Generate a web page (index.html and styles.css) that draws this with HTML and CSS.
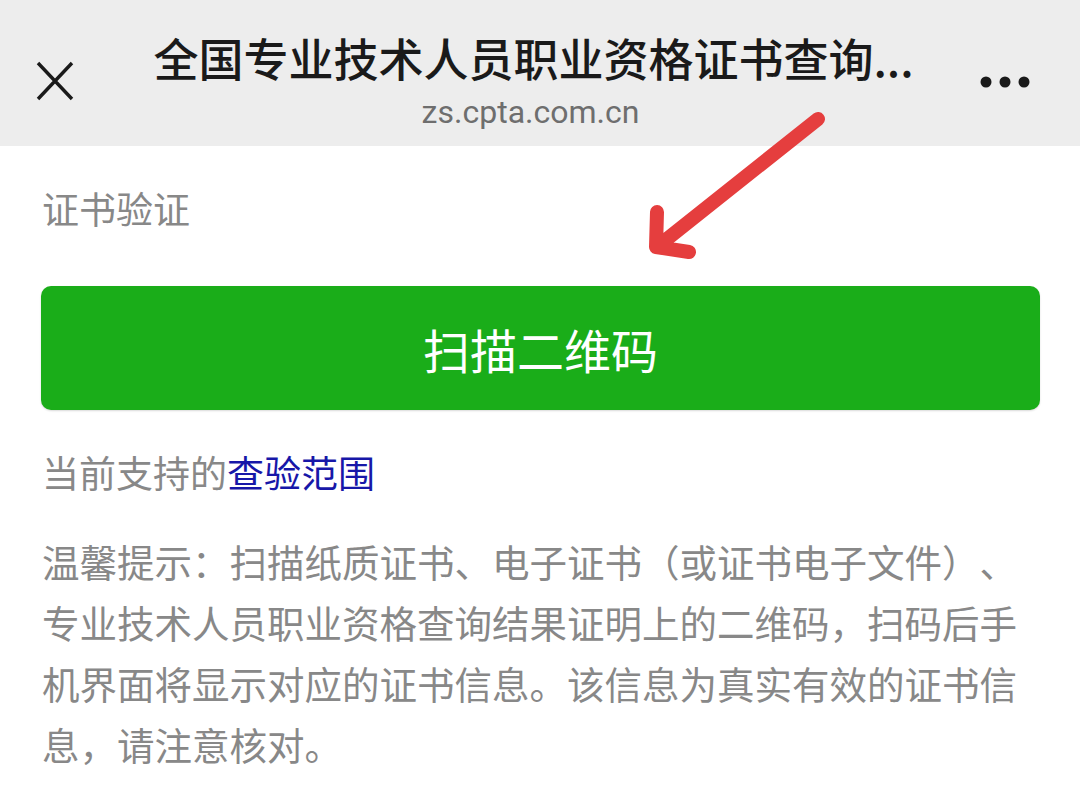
FILE: index.html
```html
<!DOCTYPE html>
<html lang="zh-CN">
<head>
  <meta charset="UTF-8" />
  <title>证书验证</title>
  <link rel="stylesheet" href="styles.css">
</head>
<body>
  <div class="topbar">
    <svg class="close" width="38" height="40" viewBox="0 0 38 40">
      <path d="M2 2 L36 38 M36 2 L2 38" stroke="#1a1a1a" stroke-width="3.4" fill="none" />
    </svg>
    <div class="heading">
      <div class="title">全国专业技术人员职业资格证书查询...</div>
      <div class="host">zs.cpta.com.cn</div>
    </div>
    <svg class="more" width="52" height="14" viewBox="0 0 52 14">
      <circle cx="7" cy="7" r="5.5" fill="#1a1a1a" />
      <circle cx="26" cy="7" r="5.5" fill="#1a1a1a" />
      <circle cx="45" cy="7" r="5.5" fill="#1a1a1a" />
    </svg>
  </div>

  <div class="content">
    <div class="label">证书验证</div>
    <button class="scan">扫描二维码</button>
    <div class="range">当前支持的<a href="#">查验范围</a></div>
    <p class="tip">温馨提示：扫描纸质证书、电子证书（或证书电子文件）、专业技术人员职业资格查询结果证明上的二维码，扫码后手机界面将显示对应的证书信息。该信息为真实有效的证书信息，请注意核对。</p>
  </div>

  <!-- 红色箭头标注 -->
  <svg class="mark" width="1080" height="796" viewBox="0 0 1080 796">
    <path d="M818 119 L662 243 M657 212 L656 247 L689 252" stroke="#e53e3e" stroke-width="14" stroke-linecap="round" stroke-linejoin="round" fill="none" />
  </svg>
</body>
</html>
```

FILE: styles.css
```css
body { margin: 0; width: 1080px; height: 796px; overflow: hidden; background: #fff; font-family: "Noto Sans CJK SC", "Noto Sans", sans-serif; position: relative; text-spacing-trim: space-all; }
.topbar { height: 146px; box-sizing: border-box; background: #ededed; display: flex; align-items: flex-start; padding: 32px 49px 0 36px; }
.close { margin-top: 29px; flex: none; }
.more { margin-top: 43px; flex: none; }
.heading { flex: 1; text-align: center; padding-left: 14px; }
.title { font-size: 45px; line-height: 52px; font-weight: 500; color: #1a1a1a; white-space: nowrap; }
.host { font-family: Roboto, "Noto Sans", sans-serif; font-size: 32px; line-height: 36px; color: #6e6e6e; margin: 10px 0 0 -6px; }
.content { padding: 37px 40px 0 42px; }
.label { font-size: 37px; line-height: 50px; color: #888; }
.scan { display: block; width: 999px; height: 124px; margin: 53px 0 0 -1px; border: none; border-radius: 10px; background: #1aad19; color: #fff; font-family: "Noto Sans CJK SC", sans-serif; font-size: 47px; box-shadow: 0 1px 2px rgba(0,0,0,0.15); }
.range { margin-top: 37px; font-size: 37px; line-height: 50px; color: #888; }
.range a { color: #1717a8; text-decoration: none; }
.tip { margin: 33px 0 0; font-size: 37.5px; line-height: 61px; color: #888; }
.mark { position: absolute; left: 0; top: 0; pointer-events: none; }
```
